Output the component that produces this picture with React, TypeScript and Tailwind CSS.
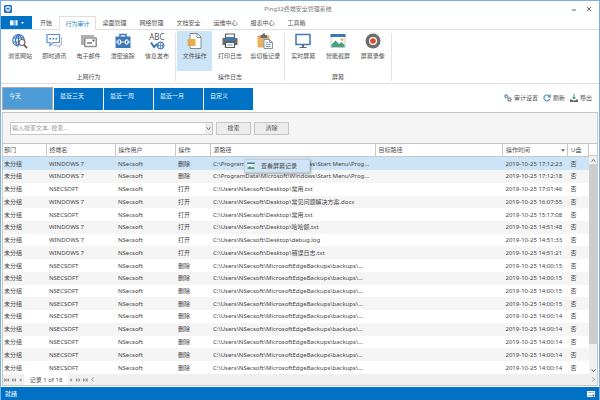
import React, { type ReactNode } from "react";

const blue = "#3b78b8";

function GlobeIcon() {
  return (
    <svg viewBox="0 0 32 32" className="h-4 w-4" fill="none" stroke={blue} strokeWidth="2.4">
      <path d="M24.5 15A11.5 11.5 0 1 0 14 26" />
      <path d="M13 3C5 9 5 20 12 26M13 3c4 3 6 6 6 9M13 3v22M3 10h20M2 18h10" />
      <circle cx="20" cy="19" r="6" fill="#fff" stroke="#686868" />
      <path d="M24 24l6 6" stroke="#686868" strokeWidth="3.6" />
    </svg>
  );
}

function ChatIcon() {
  return (
    <svg viewBox="0 0 32 32" className="h-4 w-4" fill="none">
      <path d="M29 9h2v15h-4v5l-6-5h-8" stroke="#b5b5b5" strokeWidth="2" />
      <path d="M2 3h25v16H14l-6 6v-6H2z" fill="#fff" stroke="#5a96d0" strokeWidth="2.4" />
      <path d="M7 10h3v3H7zM13 10h3v3h-3zM19 10h3v3h-3z" fill={blue} />
    </svg>
  );
}

function MailIcon() {
  return (
    <svg viewBox="0 0 32 32" className="h-4 w-4" fill="none">
      <path d="M0 4h26v4H6v16H0z" fill="#b0b0b0" />
      <rect x="7.500" y="10" width="23" height="17" rx="1" fill="#fff" stroke="#909090" strokeWidth="3" />
      <path d="M23 13h4v4h-4z" fill="#606060" />
      <path d="M12 20h10" stroke="#606060" strokeWidth="2.6" />
    </svg>
  );
}

function CaseIcon() {
  return (
    <svg viewBox="0 0 32 32" className="h-4 w-4" fill="none">
      <path d="M10 8V3h12v5" stroke={blue} strokeWidth="3" />
      <path d="M1 7h30v23H1z" fill={blue} />
      <path d="M1 18h30" stroke="#fff" strokeWidth="2" />
      <path d="M6 14h5v8H6zM21 14h5v8h-5z" fill={blue} stroke="#fff" strokeWidth="2" />
    </svg>
  );
}

function AbcIcon() {
  return (
    <span className="flex h-4 w-4 flex-col items-center">
      <span className="text-[8px] leading-[8px] text-[#5c5c5c]">ABC</span>
      <svg viewBox="0 0 32 18" className="h-[9px] w-4 shrink-0" fill="none" stroke={blue}>
        <path d="M4 3l6 9 6-6" strokeWidth="4" />
        <circle cx="23" cy="9" r="7" strokeWidth="2" />
        <path d="M23 2v14M16 9h14M20 3q-3 6 0 12M26 3q3 6 0 12" strokeWidth="1.4" />
      </svg>
    </span>
  );
}

function FileIcon() {
  return (
    <svg viewBox="0 0 32 32" className="h-4 w-4" fill="none">
      <path d="M6 1h15l7 7v23H6z" fill="#fff" stroke="#8a8a8a" strokeWidth="2" />
      <path d="M20 1v8h8" stroke="#8a8a8a" strokeWidth="2" />
      <path d="M1 12h16v14H1z" fill="#e8aa50" />
    </svg>
  );
}

function PrinterIcon() {
  return (
    <svg viewBox="0 0 32 32" className="h-4 w-4" fill="none">
      <path d="M7 2h18v9H7z" fill="#fff" stroke="#5b5b5b" strokeWidth="2.4" />
      <path d="M1 10h30v14H1z" fill="#6a6a6a" />
      <path d="M6 8h20v7H6z" fill={blue} />
      <path d="M7 19h18v10H7z" fill="#fff" stroke="#5b5b5b" strokeWidth="2.4" />
      <path d="M11 24h10" stroke="#6d9fd0" strokeWidth="2" />
    </svg>
  );
}

function ClipboardIcon() {
  return (
    <svg viewBox="0 0 32 32" className="h-4 w-4" fill="none">
      <path d="M1 5h24v24H1z" fill="#e6b160" />
      <path d="M7 4h4V1h5v3h4v6H7z" fill="#6d6d6d" />
      <path d="M14 13h11l6 6v12H14z" fill="#fff" stroke="#8193a7" strokeWidth="2" />
      <path d="M25 13v6h6M18 19h4M18 23h9M18 27h9" stroke="#5f92c4" strokeWidth="1.8" />
    </svg>
  );
}

function MonitorIcon() {
  return (
    <svg viewBox="0 0 32 32" className="h-4 w-4" fill="none">
      <path d="M2 3h28v20H2z" fill="#fff" stroke={blue} strokeWidth="3" />
      <path d="M14 24h4v4h5v2H9v-2h5z" fill="#666" />
    </svg>
  );
}

function PictureIcon({ className }: { className: string }) {
  return (
    <svg viewBox="0 0 32 32" className={className} fill="none">
      <path d="M2 3h28v26H2z" fill="#fff" stroke="#b4b9bd" strokeWidth="1.5" />
      <path d="M1 2h30v6H1z" fill={blue} />
      <path d="M3 28v-5l8-8 7 7 5-4 6 6v4z" fill="#43a083" />
      <circle cx="24" cy="13" r="3.2" fill="#f0bc4e" />
    </svg>
  );
}

function RecordIcon() {
  return (
    <svg viewBox="0 0 32 32" className="h-4 w-4">
      <circle cx="16" cy="16" r="15" fill="#6e6e6e" />
      <circle cx="16" cy="16" r="8" fill="#fff" />
      <circle cx="16" cy="16" r="5.6" fill="#d94b2b" />
    </svg>
  );
}

function GearsIcon() {
  return (
    <svg viewBox="0 0 16 16" className="h-2 w-2" fill="none">
      <circle cx="4.5" cy="4.5" r="2.6" stroke={blue} strokeWidth="2" />
      <circle cx="4.5" cy="4.5" r="3.8" stroke={blue} strokeWidth="1.2" strokeDasharray="1.5 1.5" />
      <circle cx="11" cy="11" r="3" stroke="#666" strokeWidth="2" />
      <circle cx="11" cy="11" r="4.4" stroke="#666" strokeWidth="1.2" strokeDasharray="1.7 1.7" />
    </svg>
  );
}

function RefreshIcon() {
  return (
    <svg viewBox="0 0 16 16" className="h-2 w-2" fill="none">
      <path d="M13.5 10A6 6 0 1 1 12 3.5" stroke="#3f93c4" strokeWidth="2.2" />
      <path d="M15.5 0v7h-7z" fill="#3f93c4" />
    </svg>
  );
}

function ExportIcon() {
  return (
    <svg viewBox="0 0 16 16" className="h-2 w-2">
      <path d="M7 0h2v6h3l-4 5-4-5h3z" fill="#36a07e" />
      <path d="M0 11h4l2 2h4l2-2h4v5H0z" fill="#666" />
    </svg>
  );
}

const menuTabs = ["桌面管理", "网络管理", "文档安全", "运维中心", "报表中心"];

type Tool = { label: string; icon: ReactNode; active?: boolean };

const groups: { title: string; width: string; tools: Tool[] }[] = [
  {
    title: "上网行为",
    width: "w-[174px]",
    tools: [
      { label: "浏览网站", icon: <GlobeIcon /> },
      { label: "即时通讯", icon: <ChatIcon /> },
      { label: "电子邮件", icon: <MailIcon /> },
      { label: "泄密追踪", icon: <CaseIcon /> },
      { label: "信息发布", icon: <AbcIcon /> },
    ],
  },
  {
    title: "操作日志",
    width: "w-[109px]",
    tools: [
      { label: "文件操作", icon: <FileIcon />, active: true },
      { label: "打印日志", icon: <PrinterIcon /> },
      { label: "剪切板记录", icon: <ClipboardIcon /> },
    ],
  },
  {
    title: "屏幕",
    width: "w-[107px]",
    tools: [
      { label: "实时屏幕", icon: <MonitorIcon /> },
      { label: "智能截屏", icon: <PictureIcon className="h-4 w-4" /> },
      { label: "屏幕录像", icon: <RecordIcon /> },
    ],
  },
];

const ranges = ["今天", "最近三天", "最近一周", "最近一月", "自定义"];

const backup = "C:\\Users\\NSecsoft\\MicrosoftEdgeBackups\\backups\\...";
const startMenu = "C:\\ProgramData\\Microsoft\\Windows\\Start Menu\\Prog...";

const records: string[][] = [
  ["WINDOWS 7", "删除", startMenu, "17:12:23"],
  ["WINDOWS 7", "删除", startMenu, "17:12:18"],
  ["NSECSOFT", "打开", "C:\\Users\\NSecsoft\\Desktop\\常用.txt", "17:01:46"],
  ["WINDOWS 7", "打开", "C:\\Users\\NSecsoft\\Desktop\\常见问题解决方案.docx", "16:07:55"],
  ["NSECSOFT", "打开", "C:\\Users\\NSecsoft\\Desktop\\常用.txt", "15:17:08"],
  ["WINDOWS 7", "打开", "C:\\Users\\NSecsoft\\Desktop\\哈哈额.txt", "14:51:48"],
  ["WINDOWS 7", "打开", "C:\\Users\\NSecsoft\\Desktop\\debug.log", "14:51:33"],
  ["WINDOWS 7", "打开", "C:\\Users\\NSecsoft\\Desktop\\错误日志.txt", "14:51:21"],
  ["NSECSOFT", "删除", backup, "14:00:15"],
  ["NSECSOFT", "删除", backup, "14:00:15"],
  ["NSECSOFT", "删除", backup, "14:00:15"],
  ["NSECSOFT", "删除", backup, "14:00:15"],
  ["NSECSOFT", "删除", backup, "14:00:14"],
  ["NSECSOFT", "删除", backup, "14:00:14"],
  ["NSECSOFT", "删除", backup, "14:00:14"],
  ["NSECSOFT", "删除", backup, "14:00:14"],
  ["NSECSOFT", "删除", backup, "14:00:14"],
];

const columns = [
  { name: "部门", width: "w-[43px]" },
  { name: "终端名", width: "w-[69px]" },
  { name: "操作用户", width: "w-[60px]" },
  { name: "操作", width: "w-[35px]" },
  { name: "源路径", width: "w-[165px]" },
  { name: "目标路径", width: "" },
  { name: "操作时间", width: "w-[65px]" },
  { name: "U盘", width: "w-[21px]" },
];

function Chevron({ d }: { d: string }) {
  return (
    <svg viewBox="0 0 8 8" className="h-[5px] w-[5px]" fill="none" stroke="#707070" strokeWidth="1.6">
      <path d={d} />
    </svg>
  );
}

function PagerButton({ label, d }: { label: string; d: string }) {
  return (
    <button aria-label={label} className="flex h-full w-[7px] items-center justify-center">
      <svg viewBox="0 0 10 8" className="h-1 w-[5px]" fill="#8a8a8a">
        <path d={d} />
      </svg>
    </button>
  );
}

function TitleBar() {
  return (
    <header className="grid h-[15px] shrink-0 grid-cols-3 items-center pr-[7px] pl-[3px]">
      <svg viewBox="0 0 16 16" className="h-2 w-2">
        <rect width="16" height="16" rx="3" fill="#1d6dc0" />
        <path d="M8 2l5 2v4q0 4-5 6-5-2-5-6V4z" fill="#fff" />
        <path d="M8 4.500v7M5 7h6" stroke="#1d6dc0" strokeWidth="2" />
      </svg>
      <h1 className="text-center text-[#7a7a7a]">Ping32终端安全管理系统</h1>
      <div className="flex justify-end gap-[9px]">
        <button aria-label="最小化">
          <svg viewBox="0 0 6 6" className="h-1.5 w-1.5" stroke="#666" strokeWidth="1">
            <path d="M1 4h4" />
          </svg>
        </button>
        <button aria-label="关闭">
          <svg viewBox="0 0 6 6" className="h-1.5 w-1.5" stroke="#666" strokeWidth="1">
            <path d="M1 1l4 4M5 1L1 5" />
          </svg>
        </button>
      </div>
    </header>
  );
}

function MenuTabs() {
  return (
    <nav className="flex h-3.5 shrink-0 border-b border-[#dfdfdf] text-[#505050]">
      <button aria-label="文件" className="flex w-[31px] items-center justify-center gap-[3px] bg-[#0072c6]">
        <svg viewBox="0 0 16 12" className="h-1.5 w-2" fill="#fff">
          <path d="M0 1q4-1 7 0v10q-3-1-7 0zM9 0h2v11H9zM12 0h3v11h-3z" />
        </svg>
        <svg viewBox="0 0 6 4" className="h-0.5 w-[3px]" fill="#fff">
          <path d="M0 0h6L3 4z" />
        </svg>
      </button>
      <button className="w-[27px] pl-px">开始</button>
      <button className="-mb-px w-[37px] border border-b-0 border-[#dfdfdf] bg-white text-[#1f7fcb]">行为审计</button>
      {menuTabs.map((tab) => (
        <button key={tab} className="w-[37px]">
          {tab}
        </button>
      ))}
      <button className="w-[31px]">工具箱</button>
    </nav>
  );
}

function Ribbon() {
  return (
    <div className="flex h-[54px] shrink-0 border-b border-[#dfdfdf] pt-px pl-px text-[#505050]">
      {groups.map((group) => (
        <section key={group.title} className={`flex ${group.width} shrink-0`}>
          <div className="flex grow flex-col">
            <div className="flex h-10 px-px">
              {group.tools.map((tool) => (
                <button
                  key={tool.label}
                  className={`flex flex-1 flex-col items-center gap-[3px] pt-0.5 whitespace-nowrap ${
                    tool.active ? "bg-[#cce4f7]" : ""
                  }`}
                >
                  {tool.icon}
                  <span>{tool.label}</span>
                </button>
              ))}
            </div>
            <h2 className="pt-0.5 text-center">{group.title}</h2>
          </div>
          <div className="my-0.5 w-px bg-[#e4e4e4]" />
        </section>
      ))}
    </div>
  );
}

function RangeBar() {
  return (
    <div className="flex h-7 shrink-0 items-center justify-between pr-[7px] pl-px">
      <div className="flex h-[23px] gap-px">
        {ranges.map((range, i) => (
          <button
            key={range}
            className={`flex items-start px-1.5 text-[#eef6fc] ${
              i === 0 ? "w-[51px] border border-[#acacac] bg-[#4c9bd6] pt-1" : "mt-px w-[49px] bg-[#0072c6] pt-1"
            }`}
          >
            {range}
          </button>
        ))}
      </div>
      <div className="flex gap-[5px] text-[#505050]">
        <button className="flex items-center gap-0.5">
          <GearsIcon />
          审计设置
        </button>
        <button className="flex items-center gap-0.5">
          <RefreshIcon />
          刷新
        </button>
        <button className="flex items-center gap-0.5">
          <ExportIcon />
          导出
        </button>
      </div>
    </div>
  );
}

function SearchBar() {
  return (
    <form className="flex h-[30px] shrink-0 items-center gap-[3px] pl-[7px]" onSubmit={(e) => e.preventDefault()}>
      <div className="flex h-[13px] w-[203px] border border-[#c6c6c6] bg-white">
        <input
          aria-label="搜索"
          placeholder="输入搜索文本, 搜索..."
          className="min-w-0 grow px-px outline-none placeholder:text-[#9a9a9a]"
        />
        <button type="button" aria-label="搜索历史" className="flex w-[7px] items-center justify-center bg-[#ececec]">
          <Chevron d="M1 2l3 4 3-4" />
        </button>
      </div>
      <button className="h-[13px] w-[35px] border border-[#c6c6c6] bg-[#ececec] text-[#505050]">搜索</button>
      <button type="button" className="h-[13px] w-[35px] border border-[#c6c6c6] bg-[#ececec] text-[#505050]">
        清除
      </button>
    </form>
  );
}

function ContextMenu() {
  return (
    <div role="menu" className="absolute top-4 left-[241px] border border-[#c3cdd6] bg-[#cfe4f6] shadow-[1px_1px_2px_#00000055]">
      <button role="menuitem" className="flex h-3 w-16 items-center gap-1.5 pl-0.5 text-[#444]">
        <PictureIcon className="h-2 w-2" />
        查看屏幕记录
      </button>
    </div>
  );
}

function RecordTable() {
  return (
    <div className="relative flex min-h-0 grow bg-white">
      <table className="h-full min-w-0 grow table-fixed border-collapse text-left text-[#444]">
        <thead>
          <tr className="h-[13px]">
            {columns.map((col, i) => (
              <th
                key={col.name}
                className={`${col.width} border-y border-r border-[#c8c8c8] p-0 pl-[3px] font-normal text-[#505050] first:pl-px`}
              >
                <span className="flex items-center justify-between whitespace-nowrap">
                  {col.name}
                  {i === 6 && (
                    <svg viewBox="0 0 8 5" className="mr-0.5 h-[3px] w-1" fill="#666">
                      <path d="M0 0h8L4 5z" />
                    </svg>
                  )}
                </span>
              </th>
            ))}
          </tr>
        </thead>
        <tbody>
          {records.map(([host, action, path, time], i) => (
            <tr key={i} className={i === 0 ? "bg-[#cce4f7]" : i % 2 ? "bg-[#f5f5f5]" : "bg-white"}>
              {["未分组", host, "NSecsoft", action, path, "", `2019-10-25 ${time}`, "否"].map((value, c) => (
                <td key={c} className="p-0 pl-[3px] whitespace-nowrap first:pl-px">
                  {value}
                </td>
              ))}
            </tr>
          ))}
        </tbody>
      </table>
      <div className="flex w-2 shrink-0 flex-col bg-[#f0f0f0]">
        <div className="h-[13px] border-y border-[#c8c8c8] bg-white" />
        <button aria-label="向上滚动" className="flex h-2 items-center justify-center">
          <Chevron d="M1 6l3-4 3 4" />
        </button>
        <div className="flex grow flex-col">
          <div className="h-[89%] bg-[#cdcdcd]" />
        </div>
        <button aria-label="向下滚动" className="flex h-2 items-center justify-center">
          <Chevron d="M1 2l3 4 3-4" />
        </button>
      </div>
      <ContextMenu />
    </div>
  );
}

function Pager() {
  return (
    <div className="flex h-[11px] shrink-0 items-center bg-[#f0f0f0] text-[#505050]">
      <div className="flex h-full">
        <PagerButton label="第一页" d="M0 0h1v8H0zM5 0v8L1 4zM10 0v8L6 4z" />
        <PagerButton label="上一页" d="M5 0v8L1 4zM10 0v8L6 4z" />
        <PagerButton label="上一条" d="M7 0v8L3 4z" />
      </div>
      <span className="flex h-full w-11 items-center justify-center bg-white whitespace-nowrap">记录 1 of 18</span>
      <div className="flex h-full">
        <PagerButton label="下一条" d="M3 0v8l4-4z" />
        <PagerButton label="下一页" d="M0 0v8l4-4zM5 0v8l4-4z" />
        <PagerButton label="最后一页" d="M0 0v8l4-4zM5 0v8l4-4zM9 0h1v8H9z" />
      </div>
      <div className="flex grow items-center justify-between px-px opacity-60">
        <Chevron d="M6 1L2 4l4 3" />
        <Chevron d="M2 1l4 3-4 3" />
      </div>
    </div>
  );
}

export default function App() {
  return (
    <div
      lang="zh-CN"
      className="flex h-screen flex-col border-t border-r border-l border-[#77b0e0] bg-white font-['Noto_Sans','Noto_Sans_CJK_SC',sans-serif] text-[6px] leading-[8px]"
    >
      <TitleBar />
      <MenuTabs />
      <Ribbon />
      <RangeBar />
      <main className="mx-px flex min-h-0 grow flex-col border border-[#c8c8c8] bg-[#f5f5f5]">
        <SearchBar />
        <RecordTable />
        <Pager />
      </main>
      <footer className="mt-px flex h-[13px] shrink-0 items-center justify-between bg-[#0072c6] px-1 text-white">
        <span>就绪</span>
        <svg viewBox="0 0 16 12" className="h-1.5 w-2" fill="none">
          <path d="M0 0h16v12H0z" fill="#fff" />
          <path d="M2 3h12M2 9h8" stroke="#8a9aa8" strokeWidth="1.5" />
          <path d="M11 7h4v4h-4z" fill="#56687a" />
        </svg>
      </footer>
    </div>
  );
}
